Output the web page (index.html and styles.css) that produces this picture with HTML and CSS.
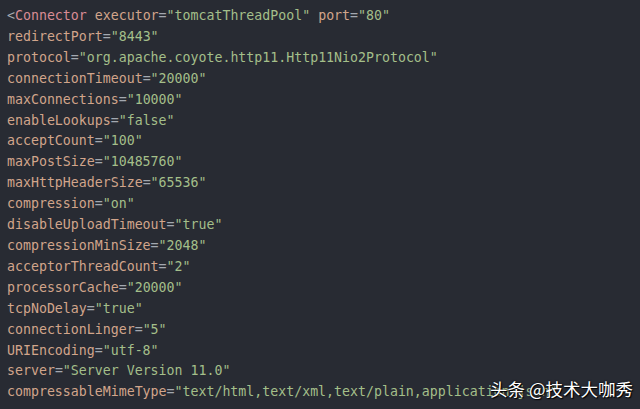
FILE: index.html
```html
<!DOCTYPE html>
<html lang="zh-CN">
<head>
    <meta charset="UTF-8">
    <meta name="viewport" content="width=device-width, initial-scale=1.0">
    <title>Tomcat Connector</title>
    <link rel="stylesheet" href="styles.css">
</head>
<body>
    <div class="code-shot">
<pre class="code"><span class="pun">&lt;</span><span class="tag">Connector</span> <span class="attr">executor</span><span class="pun">=</span><span class="str">"tomcatThreadPool"</span> <span class="attr">port</span><span class="pun">=</span><span class="str">"80"</span>
<span class="attr">redirectPort</span><span class="pun">=</span><span class="str">"8443"</span>
<span class="attr">protocol</span><span class="pun">=</span><span class="str">"org.apache.coyote.http11.Http11Nio2Protocol"</span>
<span class="attr">connectionTimeout</span><span class="pun">=</span><span class="str">"20000"</span>
<span class="attr">maxConnections</span><span class="pun">=</span><span class="str">"10000"</span>
<span class="attr">enableLookups</span><span class="pun">=</span><span class="str">"false"</span>
<span class="attr">acceptCount</span><span class="pun">=</span><span class="str">"100"</span>
<span class="attr">maxPostSize</span><span class="pun">=</span><span class="str">"10485760"</span>
<span class="attr">maxHttpHeaderSize</span><span class="pun">=</span><span class="str">"65536"</span>
<span class="attr">compression</span><span class="pun">=</span><span class="str">"on"</span>
<span class="attr">disableUploadTimeout</span><span class="pun">=</span><span class="str">"true"</span>
<span class="attr">compressionMinSize</span><span class="pun">=</span><span class="str">"2048"</span>
<span class="attr">acceptorThreadCount</span><span class="pun">=</span><span class="str">"2"</span>
<span class="attr">processorCache</span><span class="pun">=</span><span class="str">"20000"</span>
<span class="attr">tcpNoDelay</span><span class="pun">=</span><span class="str">"true"</span>
<span class="attr">connectionLinger</span><span class="pun">=</span><span class="str">"5"</span>
<span class="attr">URIEncoding</span><span class="pun">=</span><span class="str">"utf-8"</span>
<span class="attr">server</span><span class="pun">=</span><span class="str">"Server Version 11.0"</span>
<span class="attr">compressableMimeType</span><span class="pun">=</span><span class="str">"text/html,text/xml,text/plain,application/json"</span></pre>
        <div class="watermark">头条 @技术大咖秀</div>
    </div>
</body>
</html>
```

FILE: styles.css
```css
html, body {
    margin: 0;
    padding: 0;
    background-color: #282b33;
}

.code-shot {
    position: relative;
    width: 640px;
    height: 409px;
    overflow: hidden;
    background-color: #282b33;
}

.code {
    margin: 0;
    padding: 6px 0 0 7px;
    font-family: "DejaVu Sans Mono", "Liberation Mono", monospace;
    font-size: 13.25px;
    line-height: 20.9px;
    white-space: pre;
    color: #a9aeb6;
}

.tag {
    color: #d98c95;
}

.attr {
    color: #d2a58b;
}

.pun {
    color: #a3a8b0;
}

.str {
    color: #a4bf8a;
}

/* watermark sits over the last line */
.watermark {
    position: absolute;
    right: 7px;
    bottom: 9px;
    font-family: "Noto Sans CJK SC", "Noto Sans", sans-serif;
    font-size: 17.5px;
    line-height: 22px;
    color: #ffffff;
    text-shadow: 0 0 2px #000, 1px 1px 1px #000;
}
```
